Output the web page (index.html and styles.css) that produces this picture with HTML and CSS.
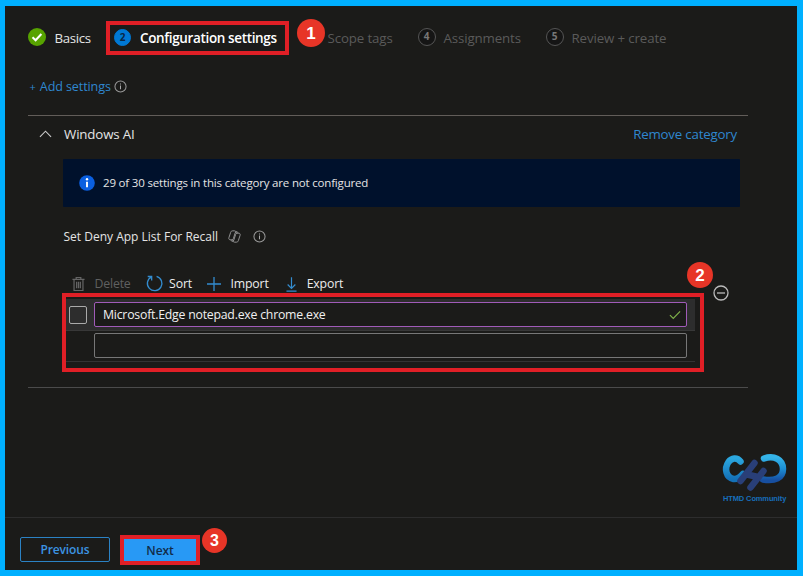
FILE: index.html
```html
<!DOCTYPE html>
<html lang="en">
<head>
<meta charset="utf-8">
<title>Configuration settings</title>
<link rel="stylesheet" href="styles.css">
</head>
<body>
<div class="frame">
  <nav class="steps">
    <div class="step basics">
      <svg class="step-icon" viewBox="0 0 18 18"><circle cx="9" cy="9" r="9" fill="#57a300"/><path d="M4.5 9.3 7.6 12.3 13.4 6" fill="none" stroke="#fff" stroke-width="2"/></svg>
      <span class="t-basics">Basics</span>
    </div>
    <div class="step current">
      <span class="num active">2</span>
      <span class="t-config">Configuration settings</span>
      <b class="badge badge-one">1</b>
    </div>
    <div class="step muted scope"><span class="t-scope">Scope tags</span></div>
    <div class="step muted assign"><span class="num">4</span><span class="t-assign">Assignments</span></div>
    <div class="step muted review"><span class="num">5</span><span class="t-review">Review + create</span></div>
  </nav>

  <div class="add">
    <a class="t-add"><span class="plus">+</span> Add settings</a>
    <svg class="add-info" viewBox="0 0 14 14"><circle cx="7" cy="7" r="6" fill="none" stroke="#999" stroke-width="1.1"/><path d="M7 6v4M7 3.7v1.2" stroke="#aaa" stroke-width="1.1"/></svg>
  </div>

  <section class="category">
    <header class="cat-head">
      <svg class="chevron" viewBox="0 0 14 8"><path d="M1 7 7 1l6 6" fill="none" stroke="#ccc" stroke-width="1.2"/></svg>
      <span class="t-win">Windows AI</span>
      <a class="t-remove">Remove category</a>
    </header>
    <div class="banner">
      <svg viewBox="0 0 16 16"><circle cx="8" cy="8" r="7.8" fill="#0a5fe0"/><path d="M8 6.7v5.5" stroke="#fff" stroke-width="1.9"/><circle cx="8" cy="4.3" r="1.2" fill="#fff"/></svg>
      <span class="t-banner">29 of 30 settings in this category are not configured</span>
    </div>
    <div class="setting">
      <span class="t-deny">Set Deny App List For Recall</span>
      <svg class="copilot" viewBox="0 0 14 14" fill="none" stroke="#999" stroke-width="1"><path d="M9 3.300 8.600 2C8.300 1.200 7.800.9 7 .9H5C3.800.9 3.200 1.500 2.800 2.700L1 8.200C.5 9.700 1.200 10.500 2.600 10.500H4.200C5 10.500 5.500 10 5.800 9.200L7.700 3.200C8 2.200 8.500 1.700 9.300 1.700 10.200 1.700 10.500 2.300 10.800 3.500M5 10.700 5.400 12C5.700 12.800 6.200 13.100 7 13.100H9C10.200 13.100 10.800 12.500 11.200 11.300L13 5.800C13.500 4.300 12.800 3.500 11.400 3.500H9.800C9 3.500 8.500 4 8.200 4.800L6.300 10.800C6 11.800 5.500 12.300 4.700 12.300 3.800 12.300 3.500 11.700 3.200 10.500"/></svg>
      <svg class="info" viewBox="0 0 14 14"><circle cx="7" cy="7" r="6" fill="none" stroke="#999" stroke-width="1.1"/><path d="M7 6v4M7 3.700v1.200" stroke="#aaa" stroke-width="1.100"/></svg>
    </div>
    <div class="tools">
      <svg class="i-trash" viewBox="0 0 14 16" fill="none" stroke="#656565" stroke-width="1.300"><path d="M.5 3h13M4.500 3V1h5v2M2.200 3v12h9.600V3M5 5.500v7M7 5.500v7M9 5.500v7"/></svg>
      <span class="t-delete">Delete</span>
      <svg class="i-sort" viewBox="0 0 18 18" fill="none" stroke="#338ccf" stroke-width="1.400"><path d="M11.200 1.500A7.700 7.700 0 1 1 5.600 2.100M1.800 1.600H6V5.800"/></svg>
      <span class="t-sort">Sort</span>
      <svg class="i-plus" viewBox="0 0 14 14"><path d="M7 0v14M0 7h14" stroke="#338ccf" stroke-width="1.300"/></svg>
      <span class="t-import">Import</span>
      <svg class="i-down" viewBox="0 0 12 16" fill="none" stroke="#338ccf" stroke-width="1.300"><path d="M6 0v12M1.800 8 6 12.200 10.200 8M.5 15.200h11"/></svg>
      <span class="t-export">Export</span>
    </div>
    <div class="list-row">
      <div class="list">
        <div class="entry filled">
          <span class="check"></span>
          <div class="field valid"><span class="t-value">Microsoft.Edge notepad.exe chrome.exe</span>
            <svg viewBox="0 0 13 10"><path d="M1 5.200 4.600 8.700 12 1" fill="none" stroke="#7fb149" stroke-width="1.300"/></svg>
          </div>
        </div>
        <div class="entry empty"><div class="field"></div></div>
        <b class="badge badge-two">2</b>
      </div>
      <svg class="minus" viewBox="0 0 16 16"><circle cx="8" cy="8" r="7" fill="none" stroke="#bbb" stroke-width="1.300"/><path d="M4 8h8" stroke="#bbb" stroke-width="1.300"/></svg>
    </div>
  </section>

  <div class="brand">
    <svg viewBox="0 0 64 38" fill="none" stroke-linecap="round">
      <defs>
        <linearGradient id="c" x1="0" y1="0" x2="0" y2="1"><stop offset="0" stop-color="#2ba7df"/><stop offset="1" stop-color="#1471b7"/></linearGradient>
        <linearGradient id="d" x1="0" y1="0" x2="0" y2="1"><stop offset="0" stop-color="#35b4e8"/><stop offset=".5" stop-color="#1c8fd4"/><stop offset="1" stop-color="#174fa0"/></linearGradient>
      </defs>
      <path d="M17.500 7.500C14 3 8.500 4 5.500 8C1 14.500 3 23.500 10.500 25C14 25.500 16.500 24 20 20" stroke="url(#c)" stroke-width="6.500"/>
      <path d="M41 4.500C51 1 60 5.500 60 15C60 24 52 27.500 40 25.500" stroke="url(#d)" stroke-width="6.500"/>
      <path d="M31.500 9 17.500 27M40.500 17 27.500 33.500M24 20.500 35 23" stroke="#293f78" stroke-width="6.500"/>
    </svg>
    <span class="t-brand">HTMD Community</span>
  </div>

  <footer>
    <div class="button previous"><span class="t-prev">Previous</span></div>
    <div class="button next"><span class="t-next">Next</span><b class="badge badge-three">3</b></div>
  </footer>
</div>
</body>
</html>
```
FILE: styles.css
```css
* { box-sizing: border-box; }
body { margin: 0; background: #1b1b19; color: #e4e4e4; font-family: "Open Sans", "Noto Sans", sans-serif; }
.frame { width: 803px; height: 576px; border: 6px solid #00b0ff; border-left-width: 5px; background: #1b1b19; display: flex; flex-direction: column; overflow: hidden; }
span, a { white-space: nowrap; }
svg { display: block; flex: none; overflow: visible; }

.steps { height: 49px; padding: 15px 0 0 23px; display: flex; align-items: flex-start; font-size: 13.3px; letter-spacing: -.13px; }
.step { height: 34px; display: flex; align-items: center; position: relative; flex: none; }
.step-icon { width: 18px; height: 18px; margin-top: -2px; }
.basics { width: 78px; gap: 8.500px; }
.t-basics { letter-spacing: -.35px; }
.current { width: 183px; border: 4px solid #e01f26; padding-left: 4px; gap: 9px; color: #fff; font-weight: 600; }
.t-config { letter-spacing: -.36px; font-size: 13.500px; }
.muted { color: #5a5a5a; }
.num { width: 18px; height: 18px; border: 1.5px solid #555; border-radius: 50%; font-size: 10px; font-weight: 700; line-height: 15px; text-align: center; margin-top: -2px; flex: none; color: #777; background: #151515; }
.num.active { width: 17px; height: 17px; background: #0078d4; border-color: #0078d4; color: #092746; line-height: 14px; }
.scope { width: 90px; padding-left: 38.500px; margin-right: 38.500px; }
.assign { width: 128px; gap: 8px; }
.review { gap: 8px; }
.badge { position: absolute; display: flex; align-items: center; justify-content: center; border-radius: 50%; background: #e73527; color: #fff; font: bold 17px/1 "Liberation Sans", sans-serif; letter-spacing: 0; }
.badge-one { left: 187px; top: -6px; width: 28px; height: 28px; }

.add { height: 62px; padding: 21px 0 0 24.500px; display: flex; gap: 4px; align-items: flex-start; color: #2f87cf; font-size: 12.600px; letter-spacing: -.12px; line-height: 21px; }
.plus { font-size: 11px; margin-right: 1px; }
.add-info { width: 13px; height: 13px; margin: 4px 0 0 -1px; }
.category { width: 720px; height: 273px; flex: none; margin: -2px 0 0 23px; border-top: 1px solid #625d59; border-bottom: 1px solid #4b4b4b; }
.cat-head { height: 43px; display: flex; align-items: center; padding: 0 11px 8px 11px; font-size: 13.300px; letter-spacing: -.15px; }
.chevron { width: 13px; height: 8px; margin-right: 12px; }
.t-remove { margin-left: auto; color: #2f87cf; letter-spacing: -.2px; }
.banner { width: 677px; height: 48px; margin-left: 35px; background: #00112c; display: flex; align-items: center; padding-left: 16px; gap: 8px; font-size: 11.500px; letter-spacing: -.18px; border-radius: 1px; }
.banner svg { width: 16px; height: 16px; }
.t-banner { margin-top: -2px; }
.setting { height: 60px; padding-bottom: 1px; margin-left: 35.500px; display: flex; align-items: center; font-size: 12px; }
.copilot { width: 13px; height: 13px; margin-left: 9.500px; }
.info { width: 13px; height: 13px; margin-left: 12px; }
.tools { height: 26px; padding: 8px 0 0 44px; display: flex; align-items: center; font-size: 12.300px; letter-spacing: -.17px; line-height: 18px; color: #ededed; }
.i-trash { width: 13px; height: 16px; margin-right: 9.500px; }
.t-delete { color: #606060; }
.i-sort { width: 17px; height: 17px; margin: -1px 6.500px 0 15px; }
.i-plus { width: 14px; height: 14px; margin: 0 9px 0 15.500px; }
.i-down { width: 11px; height: 15px; margin: 0 9.500px 0 17.500px; }

.list-row { display: flex; margin-left: 34px; align-items: flex-start; }
.list { position: relative; width: 642px; height: 79px; border: 4px solid #e01f26; padding: 2px 5px 0 0; }
.entry { display: flex; align-items: center; width: 629px; }
.filled { height: 32px; padding: 0 8px 0 3px; background: #2d2d2d; border-bottom: 1px solid #383838; }
.check { width: 18px; height: 18px; border: 1.500px solid #aaa; border-radius: 2px; margin-right: 7px; }
.empty { height: 31px; padding: 0 8px 1px 28px; border-bottom: 1px solid #333; }
.field { width: 593px; height: 25px; border: 1px solid #777; border-radius: 2px; }
.field.valid { display: flex; align-items: center; justify-content: space-between; padding: 0 5px 0 8px; border-color: #a05bb8; background: #1b1b19; font-size: 12.300px; letter-spacing: -.23px; color: #f0f0f0; }
.field svg { width: 12px; height: 10px; }
.badge-two { left: 621px; top: -35px; width: 26px; height: 26px; }
.minus { width: 16px; height: 16px; margin: -8px 0 0 9px; }

.brand { width: 64px; margin: 66px 0 0 718px; }
.brand svg { width: 64px; height: 38px; }
.t-brand { display: block; margin-top: 2px; color: #176ebb; font: bold 7.500px/9px "Liberation Sans", sans-serif; letter-spacing: -.13px; }

footer { position: relative; margin-top: auto; height: 53px; flex: none; border-top: 1px solid #2d2d2d; padding: 17px 0 0 15px; display: flex; gap: 10px; font-size: 12px; letter-spacing: -.1px; font-weight: 600; }
.button { position: relative; display: flex; align-items: center; justify-content: center; }
.previous { width: 90px; height: 25px; margin-top: 2px; border: 1px solid #2b82c4; border-radius: 2px; color: #3c94e3; }
.next { width: 80px; height: 30px; border: 4px solid #e01f26; background: #2899f5; color: #122c49; }
.badge-three { left: 78px; top: -11px; width: 25px; height: 25px; font-size: 16px; }
```
